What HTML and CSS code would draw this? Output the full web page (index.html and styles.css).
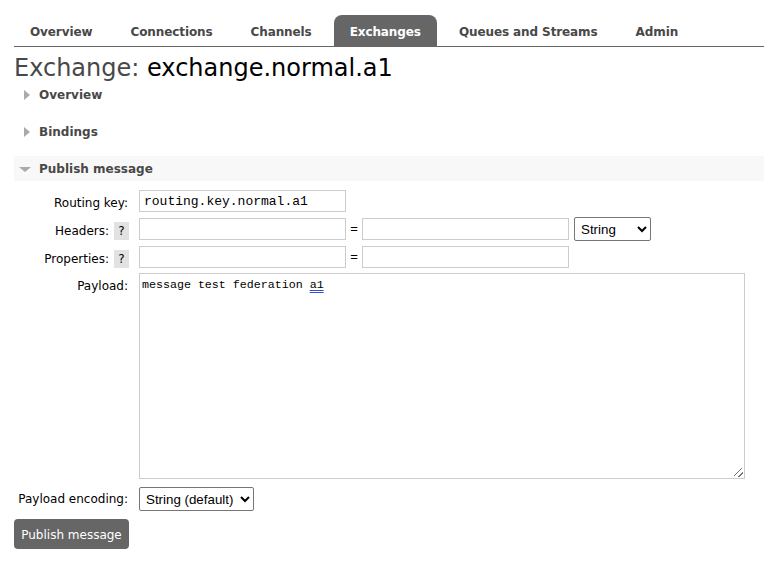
FILE: index.html
```html
<!DOCTYPE html>
<html>
<head>
<meta charset="utf-8">
<link rel="stylesheet" href="styles.css">
</head>
<body>
<div class="page">
  <nav class="tabs">
    <a class="tab">Overview</a>
    <a class="tab">Connections</a>
    <a class="tab">Channels</a>
    <a class="tab active">Exchanges</a>
    <a class="tab">Queues and Streams</a>
    <a class="tab">Admin</a>
  </nav>
  <h1 class="title"><span class="kind">Exchange:</span> <b class="name">exchange.normal.a1</b></h1>

  <div class="section"><span class="tri right"></span>Overview</div>
  <div class="section"><span class="tri right"></span>Bindings</div>
  <div class="section open"><span class="tri down"></span>Publish message</div>

  <form class="form">
    <div class="row">
      <label class="lbl">Routing key:</label>
      <input class="inp mono" type="text" value="routing.key.normal.a1">
    </div>
    <div class="row">
      <label class="lbl">Headers: <span class="help">?</span></label>
      <input class="inp" type="text">
      <span class="eq">=</span>
      <input class="inp" type="text">
      <select class="sel type"><option>String</option></select>
    </div>
    <div class="row">
      <label class="lbl">Properties: <span class="help">?</span></label>
      <input class="inp" type="text">
      <span class="eq">=</span>
      <input class="inp" type="text">
    </div>
    <div class="row tall">
      <label class="lbl">Payload:</label>
      <div class="payload"><span>message test federation </span><span class="spell">a1</span><span class="grip"></span></div>
    </div>
    <div class="row enc">
      <label class="lbl">Payload encoding:</label>
      <select class="sel encsel"><option>String (default)</option></select>
    </div>
    <button class="btn" type="button">Publish message</button>
  </form>
</div>
</body>
</html>
```
FILE: styles.css
```css
html, body { margin: 0; padding: 0; background: #fff; }
body {
  font-family: "DejaVu Sans", Verdana, sans-serif;
  font-size: 12px;
  color: #484848;
}
.page { padding-left: 14px; }

.tabs {
  display: flex;
  gap: 6px;
  padding-top: 15px;
  border-bottom: 1px solid #666;
  height: 31px;
}
.tab {
  display: block;
  padding: 0 16px;
  line-height: 35px;
  height: 31px;
  font-weight: bold;
  font-size: 12px;
  color: #484848;
  border-radius: 8px 8px 0 0;
  letter-spacing: -0.1px;
}
.tab.active { background: #666; color: #fff; }

.title {
  margin: 7px 0 0;
  font-size: 24px;
  line-height: 28px;
  font-weight: normal;
  color: #484848;
  letter-spacing: 0;
}
.title .name { font-weight: normal; color: #000; }

.section {
  box-sizing: border-box;
  height: 25px;
  padding-top: 1px;
  margin-bottom: 12px;
  font-weight: bold;
  color: #484848;
  display: flex;
  align-items: center;
}
.section.open { background: #f8f8f8; margin-bottom: 9px; }
.tri { display: block; width: 0; height: 0; }
.tri.right {
  margin: 0 9px 0 10px;
  border-top: 5px solid transparent;
  border-bottom: 5px solid transparent;
  border-left: 6px solid #aaa;
}
.tri.down {
  margin: 0 8px 0 5px;
  border-left: 6px solid transparent;
  border-right: 6px solid transparent;
  border-top: 5px solid #aaa;
}

.form { display: flex; flex-direction: column; }
.row {
  display: flex;
  align-items: flex-start;
  height: 22px;
  margin-bottom: 6px;
}
.row.tall { height: 206px; margin-top: -1px; margin-bottom: 8px; }
.row.enc { height: 24px; margin-bottom: 8px; }
.lbl {
  width: 114px;
  flex: none;
  margin-right: 11px;
  text-align: right;
  color: #000;
  padding-top: 3px;
  line-height: 20px;
  display: flex;
  justify-content: flex-end;
  align-items: flex-start;
  white-space: nowrap;
}
.enc .lbl { padding-top: 2px; }
.help {
  display: inline-block;
  width: 15px;
  height: 18px;
  line-height: 18px;
  margin: 1px -1px 0 5px;
  background: #e2e2e2;
  text-align: center;
  color: #000;
  font-size: 12px;
}
.inp {
  box-sizing: border-box;
  width: 207px;
  height: 22px;
  margin: 0;
  border: 1px solid #ccc;
  padding: 0 4px;
  font-family: "DejaVu Sans", sans-serif;
  font-size: 12px;
  outline: none;
}
.mono { font-family: "Liberation Mono", "DejaVu Sans Mono", monospace; font-size: 13px; color: #000; }
.eq {
  width: 16px;
  text-align: center;
  line-height: 22px;
  color: #000;
  font-family: "Liberation Sans", Arial, sans-serif;
  font-size: 13px;
}
.sel {
  box-sizing: border-box;
  height: 24px;
  margin: -1px 0 0 5px;
  font-family: "Liberation Sans", Arial, sans-serif;
  font-size: 13.33px;
  color: #000;
  border: 1px solid #767676;
  border-radius: 2px;
  background: #fff;
  padding: 0 2px;
}
.sel.type { width: 77px; }
.sel.encsel { width: 115px; margin: 0; }

.payload {
  position: relative;
  box-sizing: border-box;
  width: 606px;
  height: 206px;
  border: 1px solid #ccc;
  padding: 4px 2px;
  font-family: "Liberation Mono", "DejaVu Sans Mono", monospace;
  font-size: 11.65px;
  line-height: 14px;
  color: #000;
  white-space: pre;
}
.spell {
  text-decoration: underline double #3050d0;
  text-underline-offset: 2px;
}
.grip {
  position: absolute;
  right: 1px;
  bottom: 1px;
  width: 9px;
  height: 9px;
  background:
    linear-gradient(135deg, transparent 42%, #777 42%, #777 50%, transparent 50%, transparent 70%, #777 70%, #777 78%, transparent 78%);
}

.btn {
  align-self: flex-start;
  width: 115px;
  height: 30px;
  margin: 0;
  border: none;
  border-radius: 4px;
  background: #666;
  color: #fff;
  font-family: "DejaVu Sans", Verdana, sans-serif;
  font-size: 12px;
  padding: 2px 0 0;
}
```
